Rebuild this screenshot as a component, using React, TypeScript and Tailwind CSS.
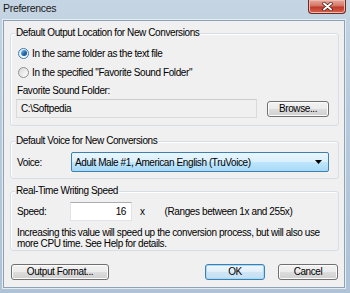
import React from "react";

const font = { fontFamily: '"Liberation Sans", Arial, sans-serif' };

const Radio = ({ checked }: { checked?: boolean }) => (
  <span
    className={`flex h-[11px] w-[11px] shrink-0 items-center justify-center rounded-full border ${
      checked ? "border-[#3d7bad] bg-gradient-to-br from-[#dfeefa] to-[#ffffff]" : "border-[#8e8f8f] bg-gradient-to-br from-[#d8d8d8] to-[#ffffff]"
    }`}
  >
    {checked && <span className="h-[6px] w-[6px] rounded-full bg-gradient-to-br from-[#8ed0f5] via-[#2a73b5] to-[#0f3f74]" />}
  </span>
);

const Button = ({ label, primary, className = "" }: { label: string; primary?: boolean; className?: string }) => (
  <div
    className={`flex h-[16px] items-center justify-center rounded-[3px] border ${
      primary
        ? "border-[#3c7fb1] bg-[linear-gradient(#f0f7fc_0%,#e0eef8_50%,#cfe5f5_51%,#c3dff3_100%)] shadow-[inset_0_0_0_1px_#a6daf5]"
        : "border-[#707070] bg-[linear-gradient(#f2f2f2_0%,#ebebeb_50%,#dddddd_51%,#cfcfcf_100%)] shadow-[inset_0_0_0_1px_#fcfcfc]"
    } ${className}`}
  >
    <span className="leading-[12px]">{label}</span>
  </div>
);

const GroupLabel = ({ children }: { children: React.ReactNode }) => (
  <div className="-mt-[7px] ml-[4px] h-[12px] w-fit bg-[#f0f0f0] px-[1px] leading-[12px]">{children}</div>
);

export default function App() {
  return (
    <div
      className="flex h-[293px] w-[350px] flex-col overflow-hidden bg-[linear-gradient(180deg,#c6d5e3_0%,#b7c9db_40%,#b0c3d6_100%)] text-[10px] tracking-[-0.4px] text-black"
      style={font}
    >
      {/* title bar */}
      <div className="flex h-[20px] shrink-0 items-start justify-between">
        <span className="ml-[3px] mt-[2px] text-[10.5px] leading-[13px] tracking-[-0.3px] text-[#1a1a1a]">Preferences</span>
        <div className="mr-[4px] flex h-[14px] w-[38px] items-center justify-center rounded-b-[4px] border border-t-0 border-[#6b2a22] bg-[linear-gradient(180deg,#e6a99e_0%,#d37563_45%,#c0392b_55%,#d5654f_100%)] shadow-[inset_0_0_0_1px_#f0b9ae]">
          <svg width="11" height="9" viewBox="0 0 11 9">
            <path d="M2 1.5 L9 7.5 M9 1.5 L2 7.5" stroke="#4a1810" strokeWidth="3.4" strokeLinecap="round" />
            <path d="M2 1.5 L9 7.5 M9 1.5 L2 7.5" stroke="#ffffff" strokeWidth="2" strokeLinecap="round" />
          </svg>
        </div>
      </div>

      {/* client area */}
      <div className="ml-[3px] mr-[5px] mb-[5px] flex flex-1 flex-col border border-[#8ea2b6] bg-[#f0f0f0] shadow-[0_0_0_1px_#e4ecf3]">
        {/* group 1 */}
        <div className="ml-[6px] mr-[5px] mt-[12px] rounded-[3px] border border-[#d5dfe5] pb-[7px] shadow-[inset_1px_1px_0_#ffffff]">
          <GroupLabel>Default Output Location for New Conversions</GroupLabel>
          <div className="mt-[8px] flex h-[12px] items-center gap-[3px] pl-[7px]">
            <Radio checked />
            <span>In the same folder as the text file</span>
          </div>
          <div className="mt-[7px] flex h-[12px] items-center gap-[3px] pl-[7px]">
            <Radio />
            <span>In the specified "Favorite Sound Folder"</span>
          </div>
          <div className="mt-[7px] h-[12px] pl-[6px] leading-[12px]">Favorite Sound Folder:</div>
          <div className="mt-[2px] flex h-[19px] items-center pl-[5px]">
            <div className="flex h-[19px] w-[241px] items-center border border-[#d9dadc] border-t-[#cacbcd] bg-[#f0f0f0] pl-[4px]">
              C:\Softpedia
            </div>
            <Button label="Browse..." className="ml-[10px] w-[62px]" />
          </div>
        </div>

        {/* group 2 */}
        <div className="ml-[6px] mr-[5px] mt-[15px] rounded-[3px] border border-[#d5dfe5] pb-[6px] shadow-[inset_1px_1px_0_#ffffff]">
          <GroupLabel>Default Voice for New Conversions</GroupLabel>
          <div className="mt-[5px] flex h-[20px] items-center pl-[6px]">
            <span className="w-[54px]">Voice:</span>
            <div className="flex h-[20px] w-[258px] items-center justify-between rounded-[2px] border border-[#3c7fb1] bg-[linear-gradient(180deg,#eaf6fd_0%,#d9f0fc_50%,#bee6fd_51%,#a7d9f5_100%)] pl-[3px] pr-[6px]">
              <span>Adult Male #1, American English (TruVoice)</span>
              <svg width="7" height="4" viewBox="0 0 7 4">
                <path d="M0 0 H7 L3.5 4 Z" fill="#000" />
              </svg>
            </div>
          </div>
        </div>

        {/* group 3 */}
        <div className="ml-[6px] mr-[5px] mt-[12px] rounded-[3px] border border-[#d5dfe5] pb-[1px] shadow-[inset_1px_1px_0_#ffffff]">
          <GroupLabel>Real-Time Writing Speed</GroupLabel>
          <div className="mt-[5px] flex h-[19px] items-center pl-[6px]">
            <span className="w-[53px]">Speed:</span>
            <div className="flex h-[19px] w-[62px] items-center justify-end border border-[#e2e3ea] border-t-[#abadb3] bg-white pr-[5px]">
              16
            </div>
            <span className="ml-[8px]">x</span>
            <span className="ml-[20px]">(Ranges between 1x and 255x)</span>
          </div>
          <div className="mt-[6px] pl-[6px] leading-[11px]">
            Increasing this value will speed up the conversion process, but will also use
            <br />
            more CPU time. See Help for details.
          </div>
        </div>

        {/* buttons */}
        <div className="ml-[7px] mr-[6px] mt-[13px] flex items-center">
          <Button label="Output Format..." className="w-[98px]" />
          <div className="flex-1" />
          <Button label="OK" primary className="w-[60px]" />
          <Button label="Cancel" className="ml-[13px] w-[60px]" />
        </div>
      </div>
    </div>
  );
}
